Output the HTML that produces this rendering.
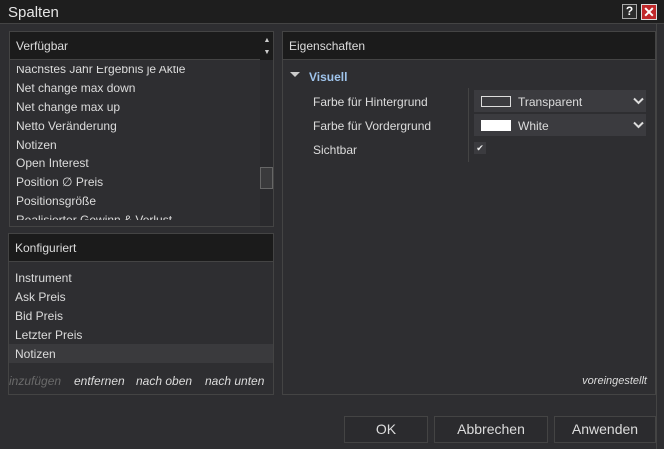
<!DOCTYPE html>
<html><head><style>
*{margin:0;padding:0;box-sizing:border-box}
body{width:664px;height:449px;background:#2e2e31;font-family:"Liberation Sans",sans-serif;font-size:12px;color:#dcdcdc;position:relative;overflow:hidden}
.a{position:absolute}
.title{left:0;top:0;width:664px;height:24px;background:#1e1e1e;border-bottom:1px solid #444}
.panel{border:1px solid #444;background:#2e2e31;overflow:hidden}
.hdr{position:absolute;left:0;top:0;right:0;height:28px;background:#1b1b1b;border-bottom:1px solid #444;padding:7px 6px;font-size:12px;z-index:2}
.it{position:absolute;left:6px;font-size:12px;white-space:nowrap}
.btn{position:absolute;top:416px;height:27px;border:1px solid #444;background:#2b2b2e;text-align:center;line-height:25px;font-size:14px}
.lnk{position:absolute;top:374px;font-style:italic;font-size:12px;color:#dcdcdc}
</style></head><body>
<div class="a title"><span class="a" style="left:8px;top:4px;font-size:15px;color:#e6e6e6">Spalten</span>
<div class="a" style="left:622px;top:4px;width:15px;height:15px;background:#2c2c2c;border:1px solid #aaa;color:#fff;font-weight:bold;font-size:12px;text-align:center;line-height:13px">?</div>
<div class="a" style="left:641px;top:4px;width:16px;height:16px;background:#c0282a;border:1px solid #ddd;color:#fff;font-weight:bold;font-size:14px;text-align:center;line-height:14px">✕</div>
</div>
<div class="a" style="left:656px;top:24px;width:1px;height:425px;background:#444"></div>

<div class="a panel" style="left:9px;top:31px;width:265px;height:196px">
<div class="hdr">Verfügbar</div>
<div class="a" style="left:250px;top:0;width:14px;height:28px;background:#1b1b1b;color:#ccc;font-size:7px;line-height:12px;text-align:center;padding-top:3px;z-index:3">▲<br>▼</div>
<div class="it" style="top:30px">Nächstes Jahr Ergebnis je Aktie</div>
<div class="a" style="left:0;top:28px;width:264px;height:6px;background:#2e2e31;z-index:2"></div>
<div class="it" style="top:49px">Net change max down</div>
<div class="it" style="top:68px">Net change max up</div>
<div class="it" style="top:87px">Netto Veränderung</div>
<div class="it" style="top:106px">Notizen</div>
<div class="it" style="top:124px">Open Interest</div>
<div class="it" style="top:143px">Position ∅ Preis</div>
<div class="it" style="top:162px">Positionsgröße</div>
<div class="it" style="top:181px">Realisierter Gewinn & Verlust</div>
<div class="a" style="left:0;top:188px;width:264px;height:8px;background:#2e2e31;z-index:2"></div>
<div class="a" style="left:250px;top:28px;width:14px;height:168px;background:#2a2a2d;z-index:3"></div>
<div class="a" style="left:250px;top:135px;width:13px;height:22px;border:1px solid #666;background:#3a3a3c;z-index:4"></div>
</div>

<div class="a panel" style="left:8px;top:233px;width:266px;height:162px">
<div class="hdr">Konfiguriert</div>
<div class="it" style="top:37px">Instrument</div>
<div class="it" style="top:56px">Ask Preis</div>
<div class="it" style="top:75px">Bid Preis</div>
<div class="it" style="top:94px">Letzter Preis</div>
<div class="a" style="left:0;top:110px;width:264px;height:19px;background:#3a3a3d"></div>
<div class="it" style="top:113px">Notizen</div>
</div>
<span class="lnk" style="left:9px;color:#6a6a6a">inzufügen</span>
<span class="lnk" style="left:74px">entfernen</span>
<span class="lnk" style="left:136px">nach oben</span>
<span class="lnk" style="left:205px">nach unten</span>

<div class="a panel" style="left:282px;top:31px;width:374px;height:364px">
<div class="hdr">Eigenschaften</div>
<div class="a" style="left:7px;top:40px;width:0;height:0;border-left:5px solid transparent;border-right:5px solid transparent;border-top:5px solid #ccc"></div>
<div class="a" style="left:26px;top:38px;font-weight:bold;color:#9fc4ec">Visuell</div>
<div class="a" style="left:30px;top:63px">Farbe für Hintergrund</div>
<div class="a" style="left:30px;top:87px">Farbe für Vordergrund</div>
<div class="a" style="left:30px;top:111px">Sichtbar</div>
<div class="a" style="left:185px;top:56px;width:1px;height:74px;background:#444"></div>
<div class="a" style="left:191px;top:58px;width:172px;height:22px;background:#3b3b3f"></div>
<div class="a" style="left:198px;top:64px;width:30px;height:11px;border:1px solid #ddd"></div>
<div class="a" style="left:235px;top:63px">Transparent</div>
<svg class="a" style="left:350px;top:65px" width="11" height="8"><path d="M1 1.5L5.5 6L10 1.5" stroke="#ddd" stroke-width="2" fill="none"/></svg>
<div class="a" style="left:191px;top:82px;width:172px;height:22px;background:#3b3b3f"></div>
<div class="a" style="left:198px;top:88px;width:30px;height:11px;background:#fff"></div>
<div class="a" style="left:235px;top:87px">White</div>
<svg class="a" style="left:350px;top:89px" width="11" height="8"><path d="M1 1.5L5.5 6L10 1.5" stroke="#ddd" stroke-width="2" fill="none"/></svg>
<div class="a" style="left:191px;top:110px;width:12px;height:12px;background:#3b3b3f;font-size:9px;text-align:center;line-height:12px;color:#eee">✔</div>
<div class="a" style="right:8px;top:343px;font-style:italic;font-size:11px">voreingestellt</div>
</div>

<div class="btn" style="left:344px;width:84px">OK</div>
<div class="btn" style="left:434px;width:114px">Abbrechen</div>
<div class="btn" style="left:554px;width:102px">Anwenden</div>
</body></html>
